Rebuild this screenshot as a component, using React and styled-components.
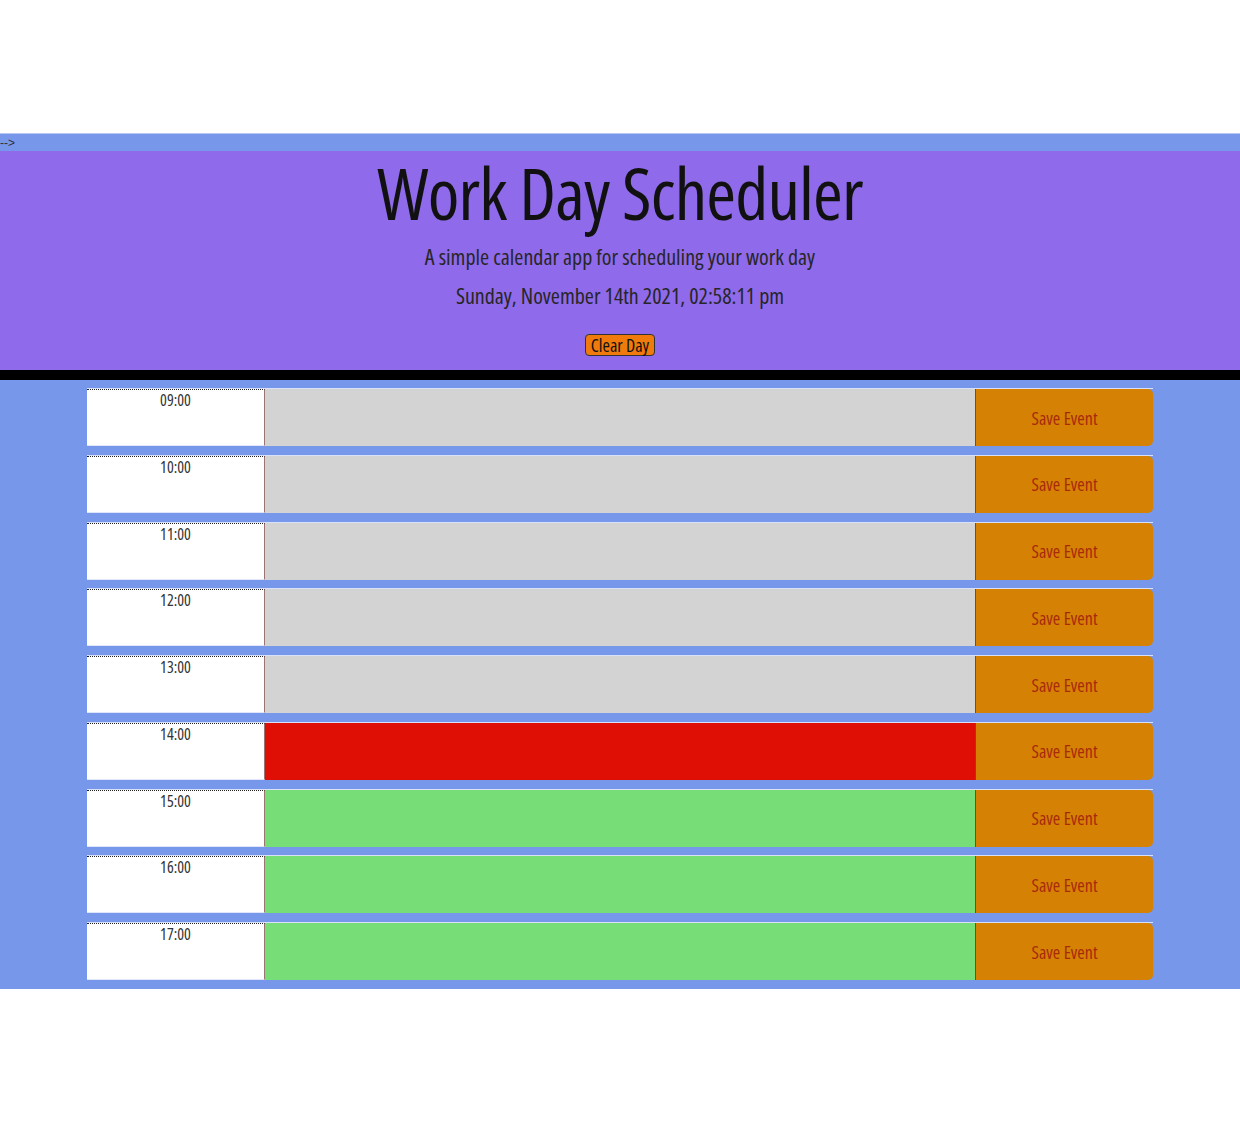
import React from "react";
import styled, { createGlobalStyle } from "styled-components";

const FONT = `"Open Sans", "Liberation Sans", sans-serif`;

const hours = [
  { label: "09:00", state: "past" },
  { label: "10:00", state: "past" },
  { label: "11:00", state: "past" },
  { label: "12:00", state: "past" },
  { label: "13:00", state: "past" },
  { label: "14:00", state: "present" },
  { label: "15:00", state: "future" },
  { label: "16:00", state: "future" },
  { label: "17:00", state: "future" },
];

const STATE_COLORS = {
  past: "#d3d3d3",
  present: "#e00f06",
  future: "#77dd77",
};

export default function App() {
  return (
    <>
      <GlobalStyle />
      <Page>
        <Comment>--&gt;</Comment>
        <Jumbotron>
          <Title>Work Day Scheduler</Title>
          <Lead first>A simple calendar app for scheduling your work day</Lead>
          <Lead>Sunday, November 14th 2021, 02:58:11 pm</Lead>
          <ClearBtn>Clear Day</ClearBtn>
        </Jumbotron>
        <Divider />
        <Container>
          {hours.map((h) => (
            <Row key={h.label}>
              <Hour>{h.label}</Hour>
              <Description state={h.state} />
              <SaveBtn>Save Event</SaveBtn>
            </Row>
          ))}
        </Container>
      </Page>
    </>
  );
}

const GlobalStyle = createGlobalStyle`
  body {
    margin: 0;
    background: #fff;
    font-family: ${FONT};
    font-stretch: 75%;
    font-weight: 400;
  }
`;

const Page = styled.div`
  margin-top: 133px;
  background: #7797eb;
`;

const Comment = styled.div`
  height: 18px;
  font-family: "Liberation Sans", sans-serif;
  font-stretch: normal;
  font-size: 12px;
  line-height: 18px;
  color: #333;
  border-top: 1px solid #b9c8f3;
  box-sizing: border-box;
`;

const Jumbotron = styled.header`
  background: #8f6aeb;
  height: 219px;
  display: flex;
  flex-direction: column;
  align-items: center;
  padding-top: 3px;
  box-sizing: border-box;
`;

const Title = styled.h1`
  margin: 0;
  font-size: 72px;
  font-weight: 400;
  letter-spacing: -0.8px;
  line-height: 76px;
  color: #111;
`;

const Lead = styled.p`
  margin: ${(p) => (p.first ? "7px 0 0" : "0")};
  font-size: 22px;
  line-height: 39px;
  color: #262626;
`;

const ClearBtn = styled.button`
  margin-top: 19px;
  font-family: ${FONT};
  font-stretch: 75%;
  font-size: 18px;
  line-height: 20px;
  padding: 0 5px;
  background: #f07a0c;
  color: #111;
  border: 1px solid #333;
  border-radius: 4px;
`;

const Divider = styled.div`
  height: 10px;
  background: #000;
`;

const Container = styled.main`
  width: 1066px;
  margin: 0 auto;
  padding: 8px 0 9px;
  display: flex;
  flex-direction: column;
  gap: 8.75px;
`;

const Row = styled.div`
  display: grid;
  grid-template-columns: 178px 1fr 178px;
  height: 58px;
  box-sizing: border-box;
  border-top: 1px solid #d9e1f8;
`;

const Hour = styled.div`
  background: #fff;
  border-top: 1px dotted #222;
  border-right: 1px solid #9b7370;
  border-bottom: 1px solid #dfe6fa;
  font-size: 16px;
  line-height: 20px;
  color: #333;
  text-align: center;
`;

const Description = styled.div`
  background: ${(p) => STATE_COLORS[p.state]};
`;

const SaveBtn = styled.button`
  background: #d58204;
  color: #a82a0b;
  border: none;
  border-left: 1px solid #555;
  border-radius: 0 5px 5px 0;
  font-family: ${FONT};
  font-stretch: 75%;
  font-size: 18px;
`;
